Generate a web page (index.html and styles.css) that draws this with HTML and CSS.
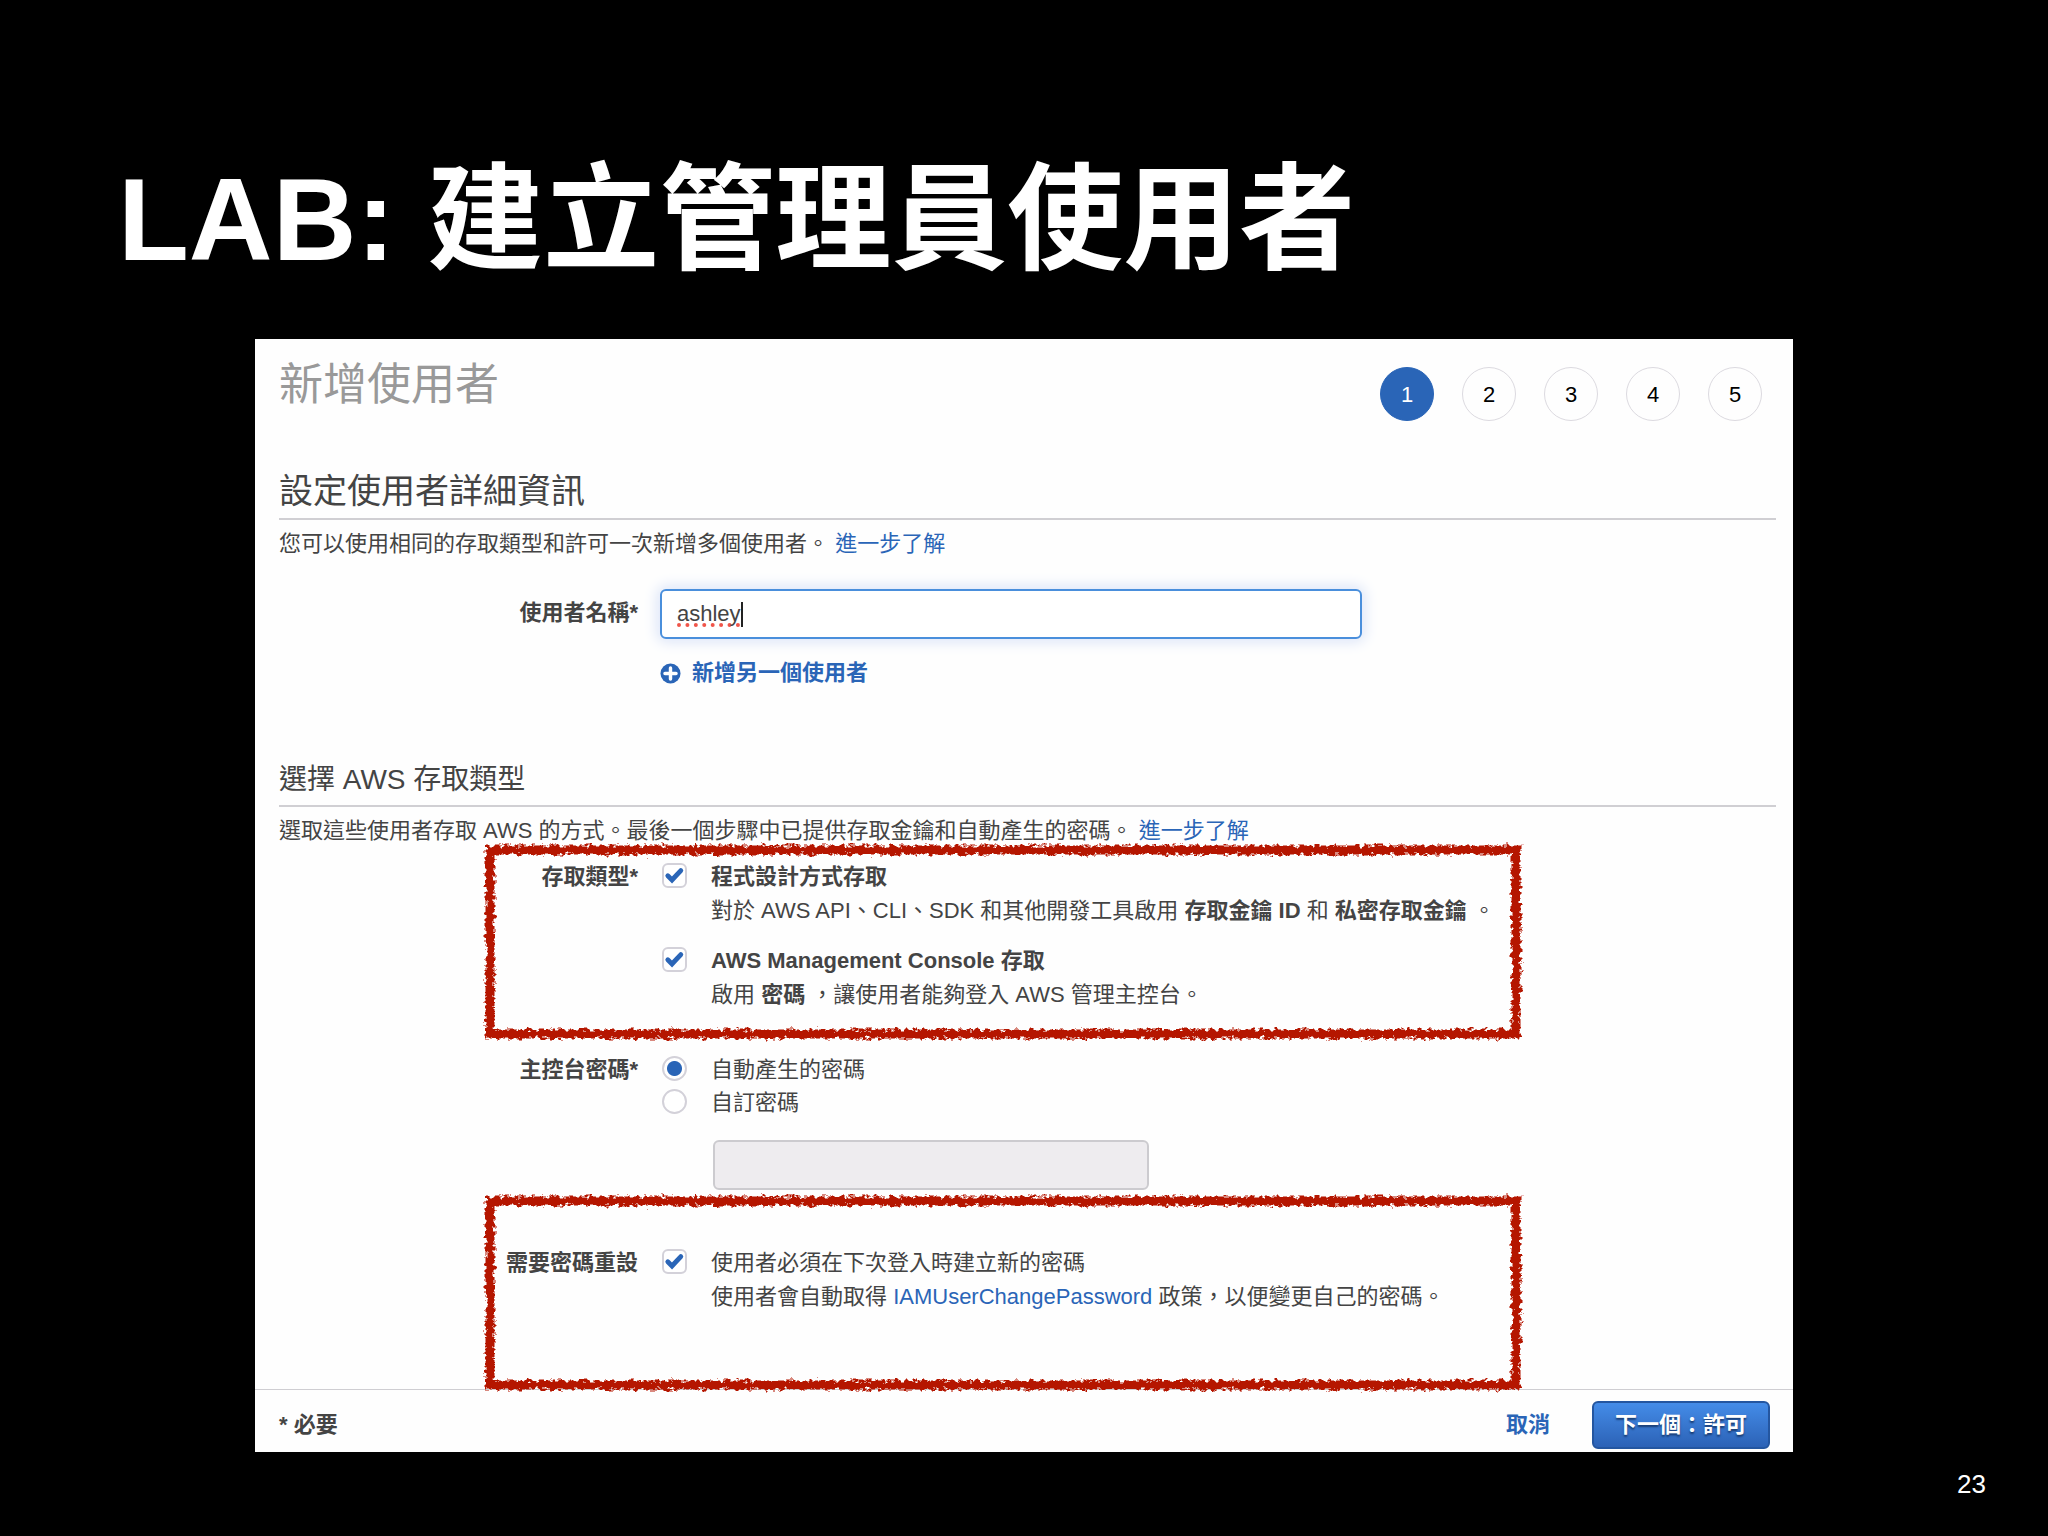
FILE: index.html
```html
<!DOCTYPE html>
<html lang="zh-Hant">
<head>
<meta charset="utf-8">
<title>LAB: 建立管理員使用者</title>
<link rel="stylesheet" href="styles.css">
</head>
<body>
<svg class="defs" aria-hidden="true">
  <defs>
    <filter id="crayon" x="-2%" y="-6%" width="104%" height="112%">
      <feTurbulence type="fractalNoise" baseFrequency="0.2 0.26" numOctaves="3" seed="4" result="noise"/>
      <feDisplacementMap in="SourceGraphic" in2="noise" scale="9" xChannelSelector="R" yChannelSelector="G"/>
    </filter>
  </defs>
</svg>
<main class="slide">
  <h1 class="slide-title">LAB: 建立管理員使用者</h1>
  <form class="panel">
    <header class="panel-header">
      <h2 class="panel-title">新增使用者</h2>
      <ol class="steps">
        <li class="step step-current" aria-current="step">1</li>
        <li class="step">2</li>
        <li class="step">3</li>
        <li class="step">4</li>
        <li class="step">5</li>
      </ol>
    </header>

    <section class="section section-details">
      <h3 class="section-title">設定使用者詳細資訊</h3>
      <p class="section-text">您可以使用相同的存取類型和許可一次新增多個使用者。 <a class="link" href="#">進一步了解</a></p>
      <div class="row row-name">
        <label class="row-label row-label-name" for="user-name">使用者名稱*</label>
        <div class="row-body">
          <input class="text-input" id="user-name" type="text" value="ashley">
          <button class="add-user" type="button">
            <svg class="add-icon" viewBox="0 0 22 22" aria-hidden="true"><circle cx="11" cy="11" r="10.5" fill="#2a65b7"/><path d="M11 5.2v11.6M5.2 11h11.6" stroke="#fff" stroke-width="3.6" stroke-linecap="round"/></svg>
            新增另一個使用者
          </button>
        </div>
      </div>
    </section>

    <section class="section section-access">
      <h3 class="section-title section-title-small">選擇 AWS 存取類型</h3>
      <p class="section-text">選取這些使用者存取 AWS 的方式。最後一個步驟中已提供存取金鑰和自動產生的密碼。 <a class="link" href="#">進一步了解</a></p>

      <div class="row row-access" role="group" aria-labelledby="access-label">
        <span class="row-label" id="access-label">存取類型*</span>
        <div class="row-body row-body-spaced">
          <div class="option">
            <input class="check" id="access-api" type="checkbox" checked>
            <div>
              <label class="option-name" for="access-api">程式設計方式存取</label>
              <p class="option-text">對於 AWS API、CLI、SDK 和其他開發工具啟用 <b>存取金鑰 ID</b> 和 <b>私密存取金鑰</b> 。</p>
            </div>
          </div>
          <div class="option">
            <input class="check" id="access-console" type="checkbox" checked>
            <div>
              <label class="option-name" for="access-console">AWS Management Console 存取</label>
              <p class="option-text">啟用 <b>密碼</b> ，讓使用者能夠登入 AWS 管理主控台。</p>
            </div>
          </div>
        </div>
        <svg class="mark mark-access" aria-hidden="true"><rect class="mark-line" width="100%" height="100%"/></svg>
      </div>

      <div class="row row-password" role="group" aria-labelledby="password-label">
        <span class="row-label" id="password-label">主控台密碼*</span>
        <div class="row-body">
          <div class="option option-radio">
            <input class="radio" id="auto-password" name="password" type="radio" checked>
            <label for="auto-password">自動產生的密碼</label>
          </div>
          <div class="option option-radio">
            <input class="radio" id="custom-password" name="password" type="radio">
            <label for="custom-password">自訂密碼</label>
          </div>
          <input class="text-input password-input" type="password" aria-label="自訂密碼" disabled>
        </div>
      </div>

      <div class="row row-reset" role="group" aria-labelledby="reset-label">
        <span class="row-label" id="reset-label">需要密碼重設</span>
        <div class="row-body">
          <div class="option">
            <input class="check" id="reset" type="checkbox" checked>
            <div>
              <label for="reset">使用者必須在下次登入時建立新的密碼</label>
              <p class="option-text">使用者會自動取得 <a class="link" href="#">IAMUserChangePassword</a> 政策，以便變更自己的密碼。</p>
            </div>
          </div>
        </div>
        <svg class="mark mark-reset" aria-hidden="true"><rect class="mark-line" width="100%" height="100%"/></svg>
      </div>
    </section>

    <footer class="panel-footer">
      <span class="required">* 必要</span>
      <button class="cancel" type="button">取消</button>
      <button class="next" type="button">下一個：許可</button>
    </footer>
  </form>
  <p class="page-number">23</p>
</main>
</body>
</html>
```
FILE: styles.css
```css
* {
  box-sizing: border-box;
}

body {
  margin: 0;
  background: #000;
  color: #444;
  font: 22px/34px "Liberation Sans", "Noto Sans CJK TC", sans-serif;
}

h1, h2, h3, p, ol {
  margin: 0;
  padding: 0;
}

button, input {
  margin: 0;
  font: inherit;
}

.defs {
  position: absolute;
  width: 0;
  height: 0;
}

.slide {
  min-height: 100vh;
  padding: 148px 0 32px;
}

.slide-title {
  margin: 0 118px 47px;
  color: #fff;
  font-size: 116px;
  line-height: 144px;
}

.panel {
  margin: 0 255px;
  background: #fefefe;
}

.panel-header {
  display: flex;
  justify-content: space-between;
  padding: 24px 31px 0 24px;
}

.panel-title {
  color: #999;
  font-size: 44px;
  font-weight: 400;
  line-height: 44px;
}

.steps {
  display: flex;
  gap: 28px;
  margin-top: 4px;
  list-style: none;
}

.step {
  width: 54px;
  height: 54px;
  border: 1px solid #dcdae0;
  border-radius: 50%;
  color: #000;
  line-height: 54px;
  text-align: center;
}

.step-current {
  border-color: #2a65b7;
  background: #2a65b7;
  color: #fff;
}

.section {
  padding: 0 17px 0 24px;
}

.section-details {
  padding-top: 50px;
}

.section-access {
  padding-top: 72px;
}

.section-title {
  margin-bottom: 7px;
  padding-bottom: 7px;
  border-bottom: 2px solid #d0cfd3;
  font-size: 34px;
  font-weight: 400;
  line-height: 40px;
}

.section-title-small {
  font-size: 28px;
  line-height: 36px;
}

.link {
  color: #2a65b7;
  text-decoration: none;
}

.row {
  position: relative;
  display: grid;
  grid-template-columns: 359px 1fr;
  gap: 22px;
}

.row-label {
  font-weight: 700;
  text-align: right;
}

.row-label-name {
  line-height: 48px;
}

.row-body-spaced {
  display: grid;
  gap: 16px;
}

.row-name {
  margin-top: 28px;
}

.row-access {
  margin-top: 12px;
}

.row-password {
  margin-top: 41px;
}

.row-reset {
  margin-top: 56px;
  padding-bottom: 75px;
}

.text-input {
  display: block;
  width: 702px;
  max-width: 100%;
  height: 50px;
  padding: 0 15px;
  border: 2px solid #4a8fdc;
  border-radius: 6px;
  outline: none;
  background: linear-gradient(#222, #222) 79px center / 2px 25px no-repeat #fff;
  box-shadow: 0 0 14px 3px #dbe4f8;
  color: #444;
  text-decoration: underline dotted #f0554a 4px;
  text-underline-offset: 2px;
  text-decoration-skip-ink: none;
}

.password-input {
  width: 436px;
  margin: 21px 0 0 53px;
  border: 2px solid #cccbcf;
  background: #eeecef;
  box-shadow: none;
}

.add-user {
  display: flex;
  align-items: center;
  gap: 11px;
  margin-top: 17px;
  padding: 0;
  border: 0;
  background: none;
  color: #2a65b7;
  font-weight: 700;
}

.add-icon {
  width: 21px;
  height: 21px;
}

.option {
  display: grid;
  grid-template-columns: 25px 1fr;
  gap: 24px;
  padding-left: 2px;
}

.option-radio {
  line-height: 33px;
}

.option-name {
  font-weight: 700;
}

.check, .radio {
  appearance: none;
  width: 25px;
  height: 25px;
  margin-top: 3px;
  border: 2px solid #d3d1d9;
  background: #fff;
}

.check {
  border-radius: 6px;
}

.check:checked {
  background: url("data:image/svg+xml,%3Csvg xmlns='http://www.w3.org/2000/svg' viewBox='0 0 21 21'%3E%3Cpath d='M3.8 10.8l4.2 4.2L16.8 5.6' fill='none' stroke='%232a65b7' stroke-width='4.8' stroke-linecap='round'/%3E%3C/svg%3E") center / 21px 21px no-repeat #fff;
}

.radio {
  border-radius: 50%;
}

.radio:checked {
  background: radial-gradient(circle, #2a65b7 7px, #fff 8px);
}

.mark {
  position: absolute;
  left: 211px;
  width: 1026px;
  height: 184px;
  overflow: visible;
  pointer-events: none;
}

.mark-access {
  top: -10px;
}

.mark-reset {
  top: -45px;
}

.mark-line {
  fill: none;
  stroke: #b51700;
  stroke-width: 9px;
  filter: url(#crayon);
}

.panel-footer {
  display: flex;
  align-items: center;
  padding: 11px 23px 3px 24px;
  border-top: 1px solid #cfced2;
}

.required {
  margin-right: auto;
  font-weight: 700;
}

.cancel {
  margin-right: 42px;
  padding: 0;
  border: 0;
  background: none;
  color: #2a65b7;
  font-weight: 700;
}

.next {
  width: 178px;
  height: 48px;
  padding: 0;
  border: 2px solid #2456a0;
  border-radius: 6px;
  background: linear-gradient(#448ce8, #2c62b6);
  color: #fff;
  font-weight: 700;
  text-shadow: 0 2px 2px #173a70;
}

.page-number {
  margin: 15px 62px 0 0;
  color: #fff;
  font-size: 26px;
  text-align: right;
}
```
